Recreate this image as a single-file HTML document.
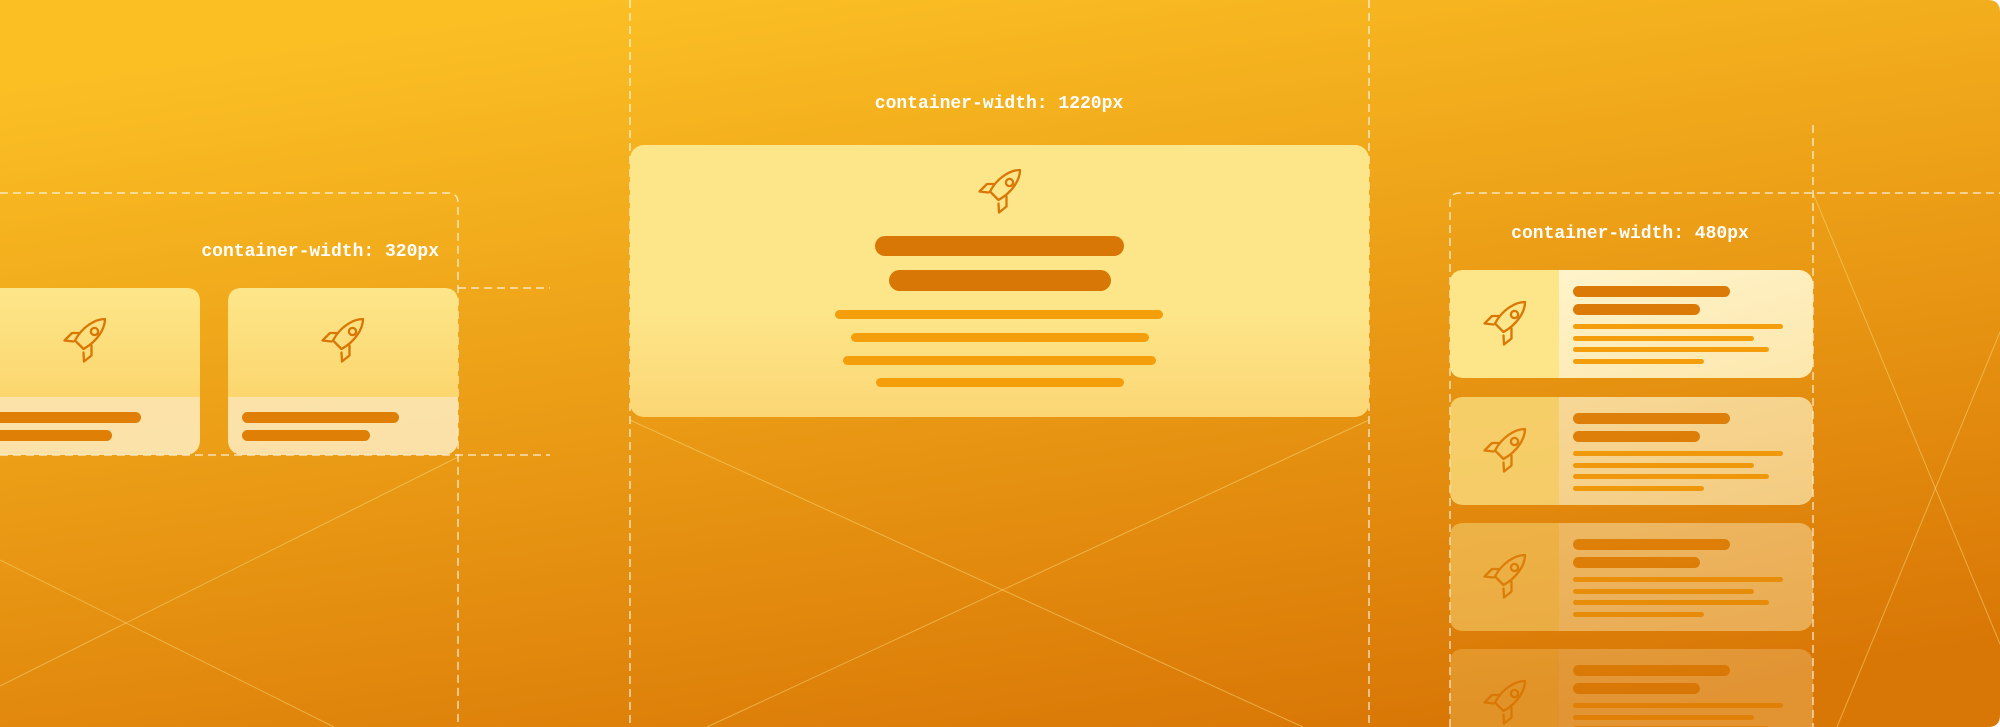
<!DOCTYPE html>
<html><head><meta charset="utf-8"><style>
html,body{margin:0;padding:0;background:#fff;}
svg{display:block;}
text{font-family:"Liberation Mono","DejaVu Sans Mono",monospace;font-size:18px;font-weight:bold;fill:#fff;}
</style></head><body>
<svg width="2000" height="727" viewBox="0 0 2000 727" xmlns="http://www.w3.org/2000/svg">
<defs>
<linearGradient id="bg" x1="0.3" y1="0" x2="0.7" y2="1">
<stop offset="0" stop-color="#fbbf24"/><stop offset="1" stop-color="#d97706"/></linearGradient>
<linearGradient id="cc" x1="0" y1="0" x2="0" y2="1">
<stop offset="0" stop-color="#fde68a"/><stop offset="0.6" stop-color="#fde68a"/><stop offset="1" stop-color="#fcd674"/></linearGradient>
<linearGradient id="lt" x1="0" y1="0" x2="0" y2="1">
<stop offset="0" stop-color="#fde68a"/><stop offset="1" stop-color="#fcd66e"/></linearGradient>
<linearGradient id="rt" x1="0" y1="0" x2="1" y2="1">
<stop offset="0" stop-color="#fef6d0"/><stop offset="1" stop-color="#fde7ad"/></linearGradient>
<g id="rk" fill="none" stroke="#d97706" stroke-width="2.3" stroke-linejoin="round" stroke-linecap="round">
<path d="M50 10C40 10 27 18 20 31.5L28.5 40C42 32.5 50 20 50 10Z"/>
<circle cx="39.5" cy="22.5" r="3.6"/>
<path d="M23.5 24L17 24 9.5 31.5 18.5 32.5"/>
<path d="M36.5 36.5L36.5 46.5 29 52.5 28.5 43.5"/>
</g>
</defs>
<path d="M0 0H1988Q2000 0 2000 12V715Q2000 727 1988 727H0Z" fill="url(#bg)"/>
<g stroke="#fde68a" stroke-opacity="0.45" stroke-width="1" fill="none">
<line x1="630" y1="420" x2="1303" y2="727"/>
<line x1="1369" y1="420" x2="707" y2="727"/>
<line x1="458" y1="457" x2="0" y2="686"/>
<line x1="0" y1="560" x2="334" y2="727"/>
<line x1="1813" y1="193" x2="2000" y2="644"/>
<line x1="2000" y1="332" x2="1837" y2="727"/>
</g>
<g stroke="#fff" stroke-opacity="0.7" stroke-width="1.5" fill="none" stroke-dasharray="8 5">
<path d="M0 193H448Q458 193 458 203V727"/>
<line x1="458" y1="288" x2="550" y2="288"/>
<line x1="0" y1="455" x2="550" y2="455"/>
<line x1="630" y1="0" x2="630" y2="727"/>
<line x1="1369" y1="0" x2="1369" y2="727"/>
<path d="M1450 727V203Q1450 193 1460 193H2000"/>
<line x1="1813" y1="125" x2="1813" y2="727"/>
</g>
<text x="439" y="256" text-anchor="end">container-width: 320px</text>
<text x="999" y="108" text-anchor="middle">container-width: 1220px</text>
<text x="1630" y="238" text-anchor="middle">container-width: 480px</text>
<g>
<rect x="-20" y="288" width="220" height="167" rx="14" fill="#fde9b8" opacity="0.9"/>
<path d="M-20 397V302Q-20 288 -6 288H186Q200 288 200 302V397Z" fill="url(#lt)"/>
<rect x="228" y="288" width="230" height="167" rx="14" fill="#fde9b8" opacity="0.9"/>
<path d="M228 397V302Q228 288 242 288H444Q458 288 458 302V397Z" fill="url(#lt)"/>
<use href="#rk" transform="translate(55 309)"/>
<use href="#rk" transform="translate(313 309)"/>
<g fill="#df7f06">
<rect x="-10" y="412" width="151" height="11" rx="5.5"/>
<rect x="-10" y="430" width="122" height="11" rx="5.5"/>
<rect x="242" y="412" width="157" height="11" rx="5.5"/>
<rect x="242" y="430" width="128" height="11" rx="5.5"/>
</g>
</g>
<rect x="630" y="145" width="739" height="272" rx="14" fill="url(#cc)"/>
<use href="#rk" transform="translate(970 160)"/>
<g fill="#d97706">
<rect x="875" y="236" width="249" height="20" rx="10"/>
<rect x="889" y="270" width="222" height="21" rx="10.5"/>
</g>
<g fill="#f59e0b">
<rect x="835" y="310" width="328" height="9" rx="4.5"/>
<rect x="851" y="333" width="298" height="9" rx="4.5"/>
<rect x="843" y="356" width="313" height="9" rx="4.5"/>
<rect x="876" y="378" width="248" height="9" rx="4.5"/>
</g>
<g id="rc">
<rect x="1450" y="270" width="363" height="108" rx="14" fill="url(#rt)"/>
<path d="M1559 270V378H1464Q1450 378 1450 364V284Q1450 270 1464 270Z" fill="#fde68a"/>
<use href="#rk" transform="translate(1475 292)"/>
<g fill="#db7a06">
<rect x="1573" y="286" width="157" height="11" rx="5.5"/>
<rect x="1573" y="304" width="127" height="11" rx="5.5"/>
</g>
<g fill="#f59e0b">
<rect x="1573" y="324" width="210" height="5" rx="2.5"/>
<rect x="1573" y="336" width="181" height="5" rx="2.5"/>
<rect x="1573" y="347" width="196" height="5" rx="2.5"/>
<rect x="1573" y="359" width="131" height="5" rx="2.5"/>
</g>
</g>
<g transform="translate(0 127)" opacity="0.72"><use href="#rc"/></g>
<g transform="translate(0 253)" opacity="0.45"><use href="#rc"/></g>
<g transform="translate(0 379)" opacity="0.25"><use href="#rc"/></g>
</svg>
</body></html>
